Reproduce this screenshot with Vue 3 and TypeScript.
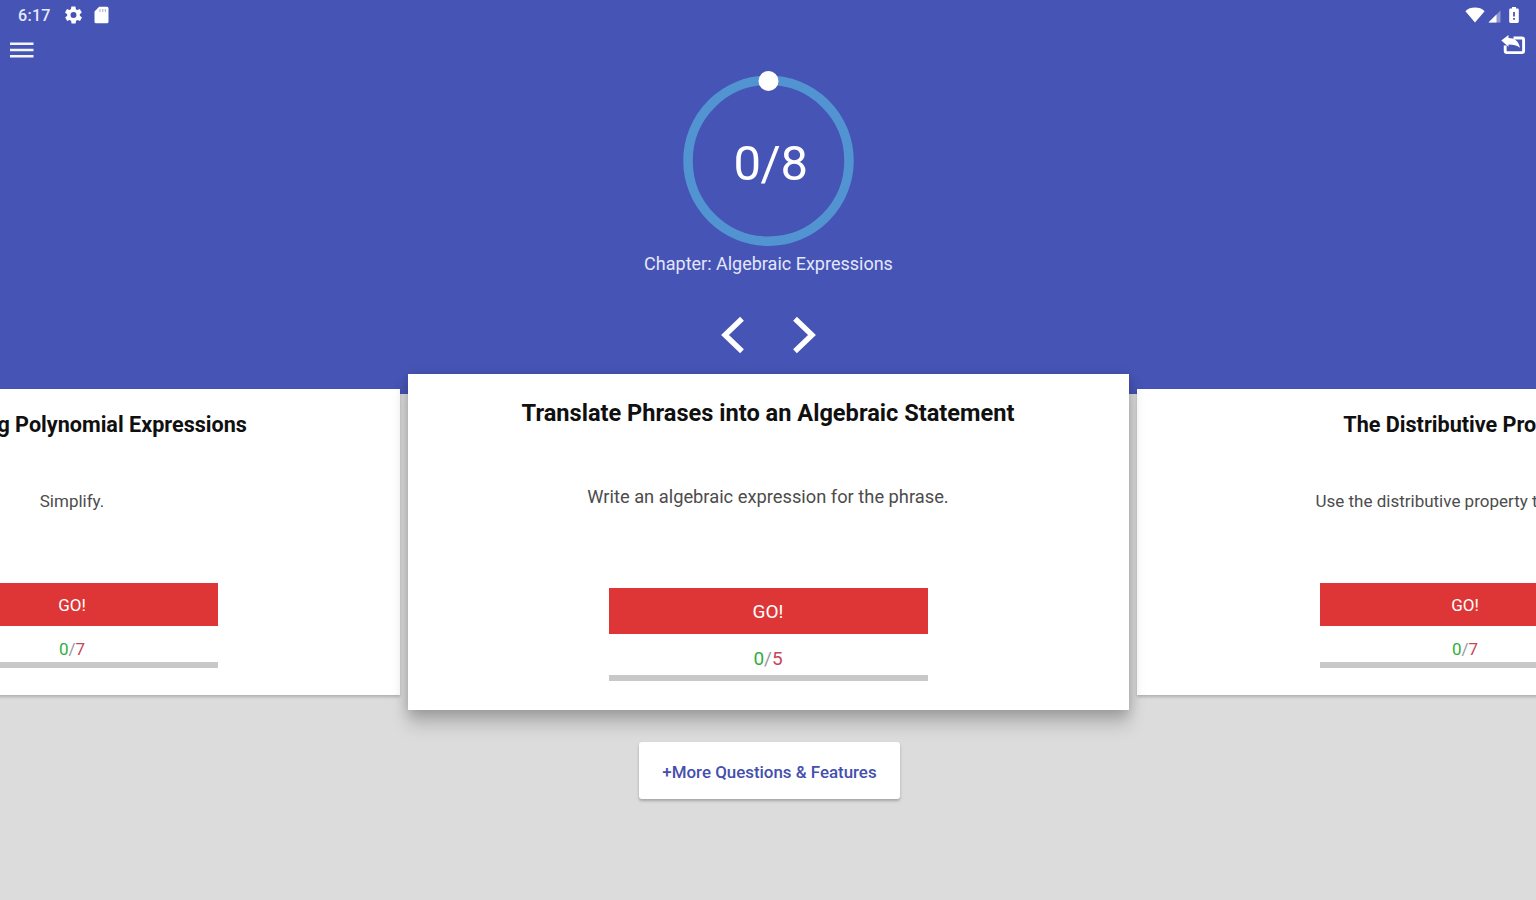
<script setup lang="ts">
interface Topic {
  id: number
  title: string
  prompt: string
  done: number
  total: number
  active: boolean
}

const topics: Topic[] = [
  { id: 1, title: 'Subtracting Polynomial Expressions', prompt: 'Simplify.', done: 0, total: 7, active: false },
  { id: 2, title: 'Translate Phrases into an Algebraic Statement', prompt: 'Write an algebraic expression for the phrase.', done: 0, total: 5, active: true },
  { id: 3, title: 'The Distributive Property', prompt: 'Use the distributive property to simplify.', done: 0, total: 7, active: false },
]
</script>

<template>
  <div class="screen">
    <header class="hero">
      <div class="status">
        <div class="status-left">
          <span class="clock">6:17</span>
          <svg class="gear" viewBox="2 2 20 20" width="17" height="18">
            <path fill="#fff" fill-rule="evenodd" d="M19.4 13c0-.3.1-.6.1-1s0-.7-.1-1l2.1-1.6c.2-.1.3-.4.1-.6l-2-3.500c-.1-.2-.4-.3-.6-.2l-2.500 1c-.5-.4-1.100-.7-1.700-1l-.4-2.600c0-.3-.2-.5-.5-.5h-4c-.2 0-.4.200-.5.400l-.4 2.700c-.6.2-1.100.6-1.700 1l-2.500-1c-.2-.1-.5 0-.6.2l-2 3.500c-.1.2-.1.5.1.6L4.600 11c0 .3-.1.700-.1 1s0 .7.1 1l-2.100 1.600c-.2.1-.3.4-.1.6l2 3.500c.1.200.4.300.6.200l2.500-1c.5.4 1.100.7 1.700 1l.4 2.700c.1.200.3.400.5.400h4c.2 0 .5-.2.5-.4l.4-2.700c.6-.2 1.200-.6 1.700-1l2.500 1c.2.100.5 0 .6-.2l2-3.500c.1-.2.100-.5-.1-.6L19.400 13zM12 15.500a3.500 3.500 0 1 1 0-7 3.500 3.500 0 0 1 0 7z" />
          </svg>
          <svg class="sd" viewBox="0 0 15 18" width="15" height="18">
            <path fill="#fff" d="M5.200.8H13a1.500 1.500 0 0 1 1.500 1.500v13.400a1.500 1.500 0 0 1-1.500 1.500H2a1.500 1.500 0 0 1-1.500-1.500V5.600z" />
            <path stroke="#4654b5" stroke-opacity=".4" stroke-width="1.300" d="M6 3v3M8.700 3v3M11.400 3v3" />
          </svg>
        </div>
        <div class="status-right">
          <svg viewBox="0 0 20 16" width="20" height="16">
            <path fill="#fff" d="M10 15.500.4 4.200C2.900 1.700 6.200.6 10 .6s7.100 1.100 9.600 3.600z" />
          </svg>
          <svg class="signal" viewBox="0 0 13 13" width="13" height="13">
            <path fill="#fff" fill-opacity=".4" d="M12.500.5v12H.5z" />
            <path fill="#fff" d="M8.500 4.500v8h-8z" />
          </svg>
          <svg class="battery" viewBox="0 0 10 16" width="10" height="16">
            <path fill="#fff" fill-rule="evenodd" d="M3 0h4v1.600h1.500A1.300 1.300 0 0 1 9.800 3v11.600a1.300 1.300 0 0 1-1.300 1.300h-7A1.300 1.300 0 0 1 .2 14.600V3a1.300 1.300 0 0 1 1.300-1.400H3zM4.100 5v4.600h1.800V5zm0 6v1.800h1.800V11z" />
          </svg>
        </div>
      </div>

      <div class="toolbar">
        <button class="icon-btn menu" aria-label="Menu">
          <svg viewBox="0 0 24 16" width="24" height="16">
            <path stroke="#fff" stroke-opacity=".94" stroke-width="2.500" d="M0 1.700h23.500M0 8h23.500M0 14.300h23.500" />
          </svg>
        </button>
        <button class="icon-btn" aria-label="Share">
          <svg viewBox="0 0 26 22" width="26" height="22">
            <path fill="none" stroke="#fff" stroke-width="2.900" stroke-linejoin="round" d="M13.500 4h8.300a1.800 1.800 0 0 1 1.800 1.800v11a1.800 1.800 0 0 1-1.800 1.800H7a1.800 1.800 0 0 1-1.800-1.800V11.500" />
            <path fill="#fff" d="M1.300 6.500 8.500 1v3c6.300 0 10.200 3.200 11.500 9.800-2.800-2.600-6.500-3.400-11.500-3.400v2.300z" />
          </svg>
        </button>
      </div>

      <div class="progress">
        <svg class="ring" viewBox="0 0 172 178" width="172" height="178">
          <circle cx="86.500" cy="90.700" r="80.500" fill="none" stroke="#5294d1" stroke-width="9.500" />
          <circle cx="86.500" cy="11" r="10" fill="#fff" />
        </svg>
        <span class="count">0/8</span>
      </div>
      <p class="chapter">Chapter: Algebraic Expressions</p>

      <nav class="pager">
        <button class="icon-btn" aria-label="Previous chapter">
          <svg viewBox="0 0 24 38" width="24" height="38">
            <path fill="none" stroke="#fff" stroke-width="5.400" d="M22 2.800 5 19l17 16.200" />
          </svg>
        </button>
        <button class="icon-btn" aria-label="Next chapter">
          <svg viewBox="0 0 24 38" width="24" height="38">
            <path fill="none" stroke="#fff" stroke-width="5.400" d="m3 2.800 17 16.200-17 16.200" />
          </svg>
        </button>
      </nav>
    </header>

    <main class="carousel">
      <article v-for="t in topics" :key="t.id" class="card" :class="{ active: t.active }">
        <h2 class="title">{{ t.title }}</h2>
        <p class="prompt">{{ t.prompt }}</p>
        <button class="go">GO!</button>
        <div class="score"><span class="done">{{ t.done }}</span><span class="slash">/</span><span class="total">{{ t.total }}</span></div>
        <div class="track"><div class="fill" :style="{ width: (t.done / t.total) * 100 + '%' }"></div></div>
      </article>
    </main>

    <footer class="footer">
      <button class="more">+More Questions &amp; Features</button>
    </footer>
  </div>
</template>

<style>
body {
  margin: 0;
  overflow: hidden;
}
</style>

<style scoped>
.screen {
  display: flex;
  flex-direction: column;
  width: 1536px;
  height: 900px;
  overflow: hidden;
  background: #dcdcdc;
  font-family: Roboto, "Liberation Sans", sans-serif;
}
button {
  border: 0;
  padding: 0;
  font-family: inherit;
}
p,
h2 {
  margin: 0;
}
.icon-btn {
  display: flex;
  background: none;
}
.hero {
  display: flex;
  flex-direction: column;
  flex: none;
  height: 394px;
  background: #4654b5;
  color: #fff;
}
.status {
  display: flex;
  justify-content: space-between;
  align-items: center;
  height: 30px;
  padding: 0 17px 0 18px;
}
.status-left,
.status-right {
  display: flex;
  align-items: center;
}
.clock {
  width: 47px;
  font-size: 16px;
  font-weight: 500;
  letter-spacing: 0.3px;
  color: #e6e9fb;
}
.sd {
  margin-left: 12px;
}
.signal {
  margin: 3px 8px 0 3px;
}
.toolbar {
  display: flex;
  justify-content: space-between;
  height: 36px;
  padding: 4px 10px 0;
}
.toolbar .icon-btn {
  align-self: flex-start;
}
.toolbar .menu {
  margin-top: 8px;
}
.progress {
  display: grid;
  align-self: center;
  place-items: center;
  height: 178px;
}
.ring,
.count {
  grid-area: 1 / 1;
}
.count {
  padding: 9px 0 0 5px;
  font-size: 49px;
  line-height: 56px;
  letter-spacing: -0.4px;
}
.chapter {
  margin-top: 4px;
  padding-left: 1px;
  font-size: 18px;
  line-height: 24px;
  text-align: center;
  color: #e3e7fa;
}
.pager {
  display: flex;
  justify-content: center;
  gap: 48px;
  margin-top: 40px;
}
.carousel {
  display: flex;
  flex: none;
  justify-content: center;
  align-items: center;
  gap: 8px;
  height: 336px;
  margin-top: -20px;
}
.card {
  display: flex;
  flex: none;
  flex-direction: column;
  align-items: center;
  box-sizing: border-box;
  width: 656px;
  height: 306px;
  padding: 22px 0 0 1px;
  background: #fff;
  box-shadow: 0 2px 3px rgba(0, 0, 0, 0.2);
}
.title {
  font-size: 21.6px;
  font-weight: 700;
  line-height: 28px;
  white-space: nowrap;
  color: #101010;
}
.prompt {
  margin-top: 50px;
  font-size: 17px;
  line-height: 24px;
  white-space: nowrap;
  color: #4c4c4c;
}
.go {
  width: 291px;
  height: 43px;
  margin-top: 70px;
  background: #de3636;
  color: #fff;
  font-size: 17px;
}
.score {
  margin-top: 11px;
  font-size: 17px;
  line-height: 24px;
}
.done {
  color: #2fae3e;
}
.slash {
  color: #999;
}
.total {
  color: #c8455a;
}
.track {
  width: 291px;
  height: 6px;
  margin-top: 1px;
  background: #c8c8c8;
}
.fill {
  height: 100%;
  background: #2fae3e;
}
.card.active {
  position: relative;
  width: 721px;
  height: 336px;
  padding: 25px 0 0;
  box-shadow: 0 15px 16px rgba(0, 0, 0, 0.17), 0 3px 12px rgba(0, 0, 0, 0.2);
}
.active .title {
  font-size: 23.6px;
}
.active .prompt {
  margin-top: 58px;
  font-size: 18.3px;
}
.active .go {
  width: 319px;
  height: 46px;
  margin-top: 79px;
  font-size: 19px;
}
.active .score {
  margin-top: 13px;
  font-size: 19px;
}
.active .track {
  width: 319px;
  margin-top: 4px;
}
.footer {
  display: flex;
  justify-content: center;
  padding: 32px 0 0 3px;
}
.more {
  width: 261px;
  height: 57px;
  padding-top: 2px;
  border-radius: 3px;
  background: #fff;
  box-shadow: 0 2px 3px rgba(0, 0, 0, 0.25);
  color: #4450ae;
  font-size: 16.9px;
  font-weight: 500;
}
</style>
